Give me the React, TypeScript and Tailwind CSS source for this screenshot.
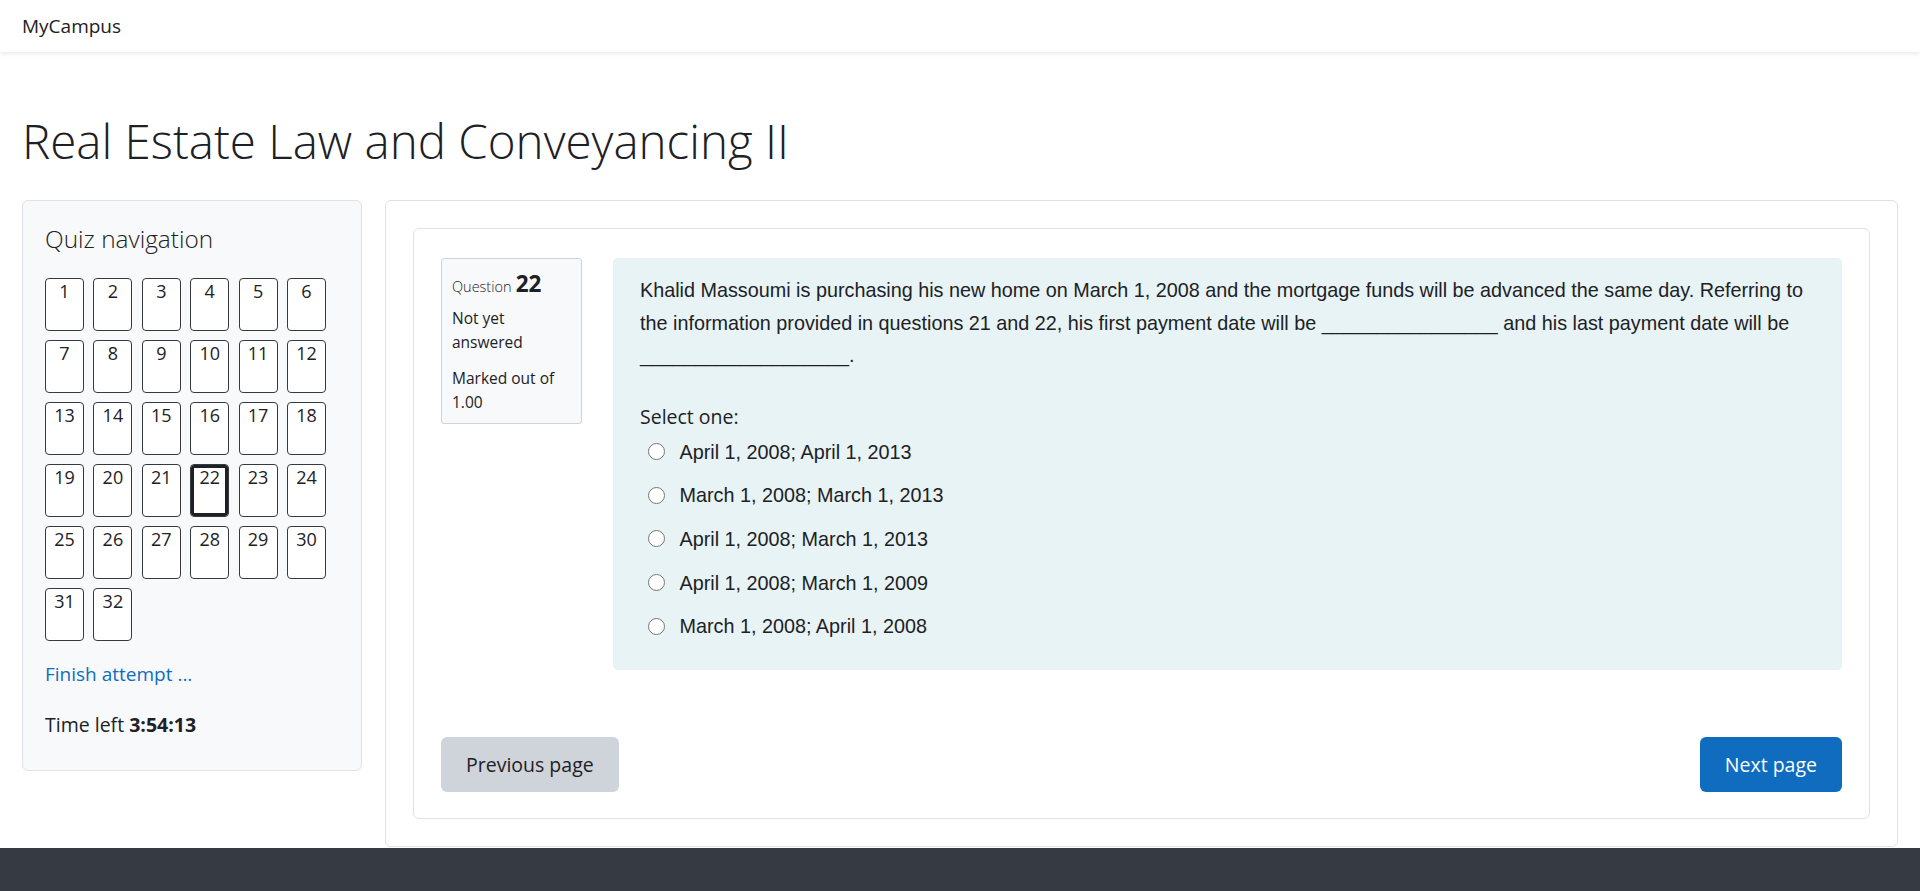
const sans = { fontFamily: '"Open Sans", "Noto Sans", sans-serif' }
const arial = { fontFamily: '"Liberation Sans", Arial, sans-serif' }

const options = [
  "April 1, 2008; April 1, 2013",
  "March 1, 2008; March 1, 2013",
  "April 1, 2008; March 1, 2013",
  "April 1, 2008; March 1, 2009",
  "March 1, 2008; April 1, 2008",
]

function QuizNav() {
  const nums = Array.from({ length: 32 }, (_, i) => i + 1)
  return (
    <aside className="w-[340px] shrink-0 rounded-[6px] border border-[#dee2e6] bg-[#f8f9fa] pl-[22px] pr-[22px] pt-[23px] pb-[31px]">
      <h5 className="text-[24.4px] font-light leading-[1.2] text-[#1d2125]">Quiz navigation</h5>
      <div className="mt-[24px] flex w-[300px] flex-wrap">
        {nums.map((n) => (
          <a
            key={n}
            className={
              "mr-[9.4px] mb-[9px] box-border flex h-[53px] w-[39px] justify-center rounded-[4px] border border-[#343a40] bg-white pt-[2px] text-[18px] leading-[21.6px] text-[#1d2125]" +
              (n === 22 ? " shadow-[inset_0_0_0_3px_#1d2125]" : "")
            }
          >
            {n}
          </a>
        ))}
      </div>
      <div className="mt-[10px] text-[19px] leading-[1.5] text-[#0f6cbf]">Finish attempt ...</div>
      <div className="mt-[22px] text-[19.5px] leading-[1.5] text-[#1d2125]">
        Time left <span className="font-bold">3:54:13</span>
      </div>
    </aside>
  )
}

function QuestionInfo() {
  return (
    <div className="box-border h-[166px] w-[141px] shrink-0 rounded-[3px] border border-[#cfd4da] bg-[#f8f9fa] px-[10px] pt-[10px] text-[#1d2125]">
      <h3 className="leading-[30px]">
        <span className="text-[14.5px] font-light">Question</span>{" "}
        <span className="text-[22.5px] font-bold">22</span>
      </h3>
      <div className="mt-[5px] text-[15.5px] leading-[23.5px]">
        Not yet
        <br />
        answered
      </div>
      <div className="mt-[13px] text-[15.5px] leading-[23.5px]">
        Marked out of
        <br />
        1.00
      </div>
    </div>
  )
}

function Formulation() {
  return (
    <div className="flex-1 rounded-[5px] bg-[#e7f3f5] pl-[27px] pr-[27px] pt-[16px] pb-[21px] text-[#1d2125]">
      <p style={arial} className="text-[19.8px] leading-[32.4px]">
        Khalid Massoumi is purchasing his new home on March 1, 2008 and the mortgage funds will be
        advanced the same day. Referring to the information provided in questions 21 and 22, his
        first payment date will be ________________ and his last payment date will be
        ___________________.
      </p>
      <div className="mt-[30px] text-[19.5px] leading-[1.5]">Select one:</div>
      <div>
        {options.map((o) => (
          <label key={o} className="flex h-[43.6px] items-center pl-[7.5px]">
            <span className="-mt-[2px] box-border h-[17px] w-[17px] rounded-full border border-[#767676] bg-white" />
            <span style={arial} className="ml-[15px] text-[19.8px] leading-[43.6px]">
              {o}
            </span>
          </label>
        ))}
      </div>
    </div>
  )
}

export default function App() {
  return (
    <div style={sans} className="min-h-screen bg-white text-[#1d2125]">
      <nav className="flex h-[52px] items-center bg-white px-[22px] shadow-[0_2px_4px_rgba(0,0,0,0.08)]">
        <span className="text-[19px]">MyCampus</span>
      </nav>

      <div className="px-[22px]">
        <h1 className="mt-[60px] text-[47.5px] font-light leading-[1.23]">
          Real Estate Law and Conveyancing II
        </h1>

        <div className="mt-[30px] flex items-start gap-[23px]">
          <QuizNav />

          <main className="flex-1 rounded-[6px] border border-[#dee2e6] bg-white p-[27px]">
            <div className="rounded-[6px] border border-[#dee2e6] px-[27px] pt-[29px] pb-[26px]">
              <div className="flex items-start gap-[31px]">
                <QuestionInfo />
                <Formulation />
              </div>
              <div className="mt-[67px] flex justify-between">
                <button className="h-[55px] rounded-[6px] bg-[#ced4da] px-[25px] text-[19.5px] text-[#1d2125]">
                  Previous page
                </button>
                <button className="h-[55px] rounded-[6px] bg-[#0f6cbf] px-[25px] text-[19.5px] text-white">
                  Next page
                </button>
              </div>
            </div>
          </main>
        </div>
      </div>

      <footer className="mt-[1px] h-[160px] bg-[#363a42]" />
    </div>
  )
}
